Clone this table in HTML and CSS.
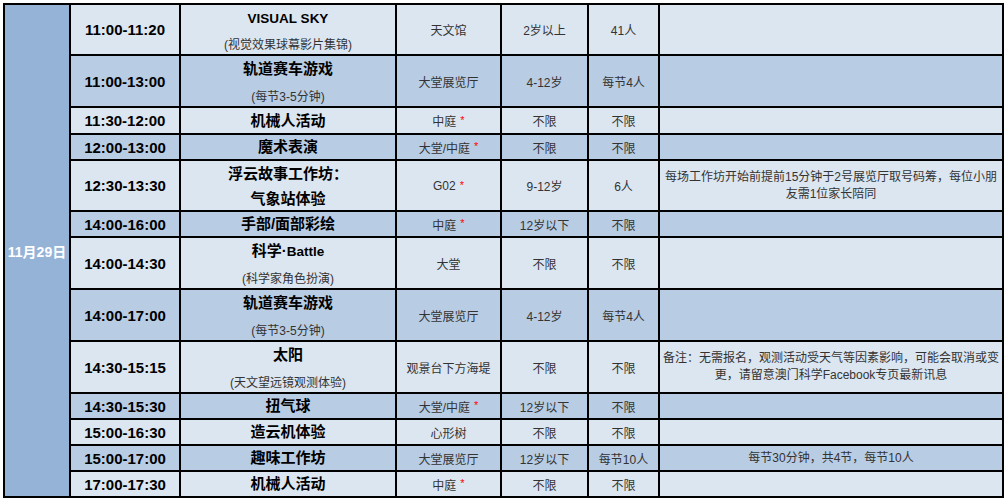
FILE: index.html
```html
<!DOCTYPE html>
<html lang="zh-CN">
<head>
<meta charset="utf-8">
<title>11月29日 活动时间表</title>
<link rel="stylesheet" href="styles.css">
</head>
<body>
<div class="sheet">
  <div class="date">11月29日</div>

  <div class="row">
    <div class="time">11:00-11:20</div>
    <div class="event two"><span class="title"><span class="lat">VISUAL SKY</span></span><span class="sub">(视觉效果球幕影片集锦)</span></div>
    <div class="info">天文馆</div>
    <div class="info">2岁以上</div>
    <div class="info">41人</div>
    <div class="note"></div>
  </div>

  <div class="row alt">
    <div class="time">11:00-13:00</div>
    <div class="event two"><span class="title">轨道赛车游戏</span><span class="sub">(每节3-5分钟)</span></div>
    <div class="info">大堂展览厅</div>
    <div class="info">4-12岁</div>
    <div class="info">每节4人</div>
    <div class="note"></div>
  </div>

  <div class="row">
    <div class="time">11:30-12:00</div>
    <div class="event"><span class="title">机械人活动</span></div>
    <div class="info">中庭<span class="star">*</span></div>
    <div class="info">不限</div>
    <div class="info">不限</div>
    <div class="note"></div>
  </div>

  <div class="row alt">
    <div class="time">12:00-13:00</div>
    <div class="event"><span class="title">魔术表演</span></div>
    <div class="info">大堂/中庭<span class="star">*</span></div>
    <div class="info">不限</div>
    <div class="info">不限</div>
    <div class="note"></div>
  </div>

  <div class="row">
    <div class="time">12:30-13:30</div>
    <div class="event stack"><span class="title">浮云故事工作坊：</span><span class="title">气象站体验</span></div>
    <div class="info">G02<span class="star">*</span></div>
    <div class="info">9-12岁</div>
    <div class="info">6人</div>
    <div class="note">每场工作坊开始前提前15分钟于2号展览厅取号码筹，每位小朋<br>友需1位家长陪同</div>
  </div>

  <div class="row alt">
    <div class="time">14:00-16:00</div>
    <div class="event"><span class="title">手部/面部彩绘</span></div>
    <div class="info">中庭<span class="star">*</span></div>
    <div class="info">12岁以下</div>
    <div class="info">不限</div>
    <div class="note"></div>
  </div>

  <div class="row">
    <div class="time">14:00-14:30</div>
    <div class="event two"><span class="title">科学·<span class="lat">Battle</span></span><span class="sub">(科学家角色扮演)</span></div>
    <div class="info">大堂</div>
    <div class="info">不限</div>
    <div class="info">不限</div>
    <div class="note"></div>
  </div>

  <div class="row alt">
    <div class="time">14:00-17:00</div>
    <div class="event two"><span class="title">轨道赛车游戏</span><span class="sub">(每节3-5分钟)</span></div>
    <div class="info">大堂展览厅</div>
    <div class="info">4-12岁</div>
    <div class="info">每节4人</div>
    <div class="note"></div>
  </div>

  <div class="row">
    <div class="time">14:30-15:15</div>
    <div class="event two"><span class="title">太阳</span><span class="sub">(天文望远镜观测体验)</span></div>
    <div class="info">观景台下方海堤</div>
    <div class="info">不限</div>
    <div class="info">不限</div>
    <div class="note">备注：无需报名，观测活动受天气等因素影响，可能会取消或变<br>更，请留意澳门科学Facebook专页最新讯息</div>
  </div>

  <div class="row alt">
    <div class="time">14:30-15:30</div>
    <div class="event"><span class="title">扭气球</span></div>
    <div class="info">大堂/中庭<span class="star">*</span></div>
    <div class="info">12岁以下</div>
    <div class="info">不限</div>
    <div class="note"></div>
  </div>

  <div class="row">
    <div class="time">15:00-16:30</div>
    <div class="event"><span class="title">造云机体验</span></div>
    <div class="info">心形树</div>
    <div class="info">不限</div>
    <div class="info">不限</div>
    <div class="note"></div>
  </div>

  <div class="row alt">
    <div class="time">15:00-17:00</div>
    <div class="event"><span class="title">趣味工作坊</span></div>
    <div class="info">大堂展览厅</div>
    <div class="info">12岁以下</div>
    <div class="info">每节10人</div>
    <div class="note">每节30分钟，共4节，每节10人</div>
  </div>

  <div class="row">
    <div class="time">17:00-17:30</div>
    <div class="event"><span class="title">机械人活动</span></div>
    <div class="info">中庭<span class="star">*</span></div>
    <div class="info">不限</div>
    <div class="info">不限</div>
    <div class="note"></div>
  </div>
</div>
</body>
</html>
```

FILE: styles.css
```css
html, body {
  margin: 0;
  padding: 0;
  background: #ffffff;
}

body {
  font-family: "Liberation Sans", "Noto Sans CJK SC", sans-serif;
  width: 1006px;
  height: 500px;
  overflow: hidden;
}

.sheet {
  display: grid;
  grid-template-columns: 64px 108px 214px 103px 85px 69px 342px;
  grid-template-rows: 49px 50px 25px 24px 49px 24px 50px 50px 50px 24px 24px 24px 24px;
  gap: 2px;
  padding: 2px;
  background: #000;
  width: max-content;
  margin: 3px 0 0 3px;
}

.date {
  grid-column: 1;
  grid-row: 1 / -1;
  background: #95b3d7;
  color: #ffffff;
  font-weight: bold;
  font-size: 14px;
  display: flex;
  align-items: center;
  justify-content: center;
  white-space: nowrap;
}

.row {
  display: contents;
}

.row > div {
  background: #dce6f1;
  display: flex;
  align-items: center;
  justify-content: center;
  text-align: center;
  overflow: visible;
  white-space: nowrap;
}

.row.alt > div {
  background: #b8cce4;
}

.time {
  font-weight: bold;
  font-size: 15px;
  color: #000;
}

.event {
  flex-direction: column;
}

.event .title {
  font-weight: bold;
  font-size: 15px;
  color: #000;
  line-height: 20px;
}

.event .lat {
  font-size: 13.5px;
}

.event.two {
  justify-content: space-between !important;
  padding: 3px 0 1px;
  box-sizing: border-box;
}

.event.two .sub {
  font-size: 12px;
  color: #333;
  line-height: 16px;
}

.event.stack .title {
  line-height: 25px;
}

.info {
  font-size: 12px;
  color: #333;
}

.star {
  color: #ff0000;
  font-size: 11px;
  margin-left: 4px;
  position: relative;
  top: -1px;
}

.note {
  font-size: 12px;
  color: #333;
  line-height: 17px;
  padding: 0 2px;
}
```
